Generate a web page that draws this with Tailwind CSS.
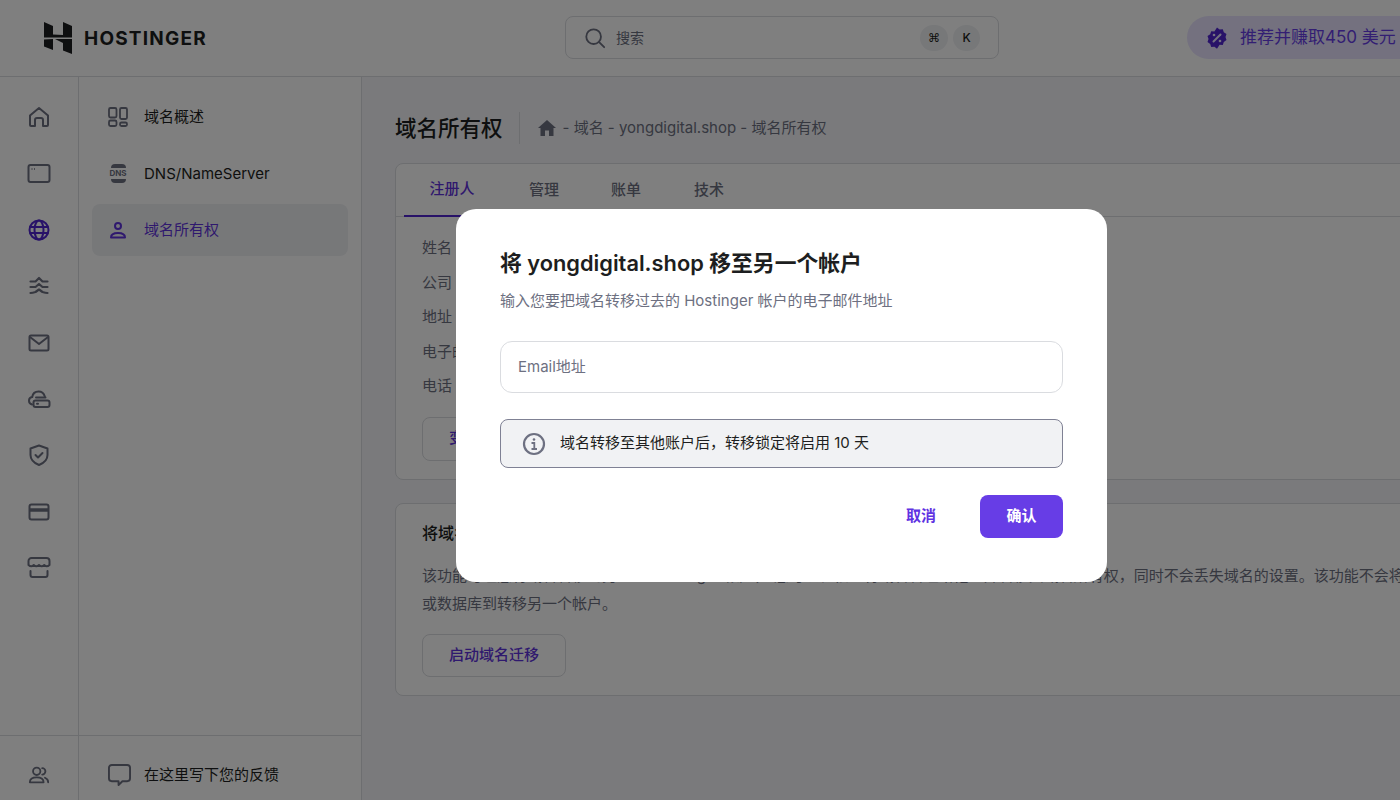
<!DOCTYPE html>
<html lang="zh">
<head>
<meta charset="utf-8" />
<title>域名所有权 - Hostinger</title>
<script src="https://cdn.jsdelivr.net/npm/@tailwindcss/browser@4"></script>
</head>
<body class="h-[800px] overflow-hidden bg-white text-[#1d1e20] font-['Inter','Noto_Sans_CJK_SC',sans-serif]">
<div class="w-[1563px]">

	<!-- header -->
	<header class="h-[77px] flex items-center pb-[1px] border-b border-[#dadce0] bg-white">
		<div class="w-[565px] shrink-0 pl-[44px] flex items-center gap-[12px]">
			<svg class="w-[28px] h-[32px]" viewBox="0 0 28 32" fill="#1d1e20">
				<path d="M0 0l9 4v8.500l10 .500V0l9 4v11.500H0z" />
				<path d="M0 17.500l9-.500v11l-9-3.500z" />
				<path d="M11 17h17v15l-9-3.500V21z" />
			</svg>
			<span class="text-[19px] leading-none font-bold tracking-[1.200px] translate-y-[1px]">HOSTINGER</span>
		</div>
		<div class="w-[434px] h-[43px] shrink-0 flex items-center pl-[18px] pr-[18px] rounded-lg border border-[#dadce0]">
			<svg class="w-[22px] h-[22px]" viewBox="0 0 24 24" fill="none" stroke="#6d7081" stroke-width="2" stroke-linecap="round">
				<circle cx="10.500" cy="10.500" r="8" />
				<path d="M16.500 16.500L22 22" />
			</svg>
			<span class="ml-[10px] text-[14px] text-[#6d7081]">搜索</span>
			<span class="ml-auto w-[28px] h-[26px] flex items-center justify-center rounded-full bg-[#eff0f3] text-[12px] font-['DejaVu_Sans',sans-serif]">⌘</span>
			<span class="ml-[5px] w-[27px] h-[26px] flex items-center justify-center rounded-full bg-[#eff0f3] text-[12px] font-medium">K</span>
		</div>
		<div class="ml-[188px] w-[300px] h-[43px] shrink-0 flex items-center pl-[18px] rounded-full bg-[#e8e3ff]">
			<svg class="w-[24px] h-[24px]" viewBox="0 0 24 24">
				<path fill="#5025d1" d="M12 1.500l2.600 1.900 3.200-.200 1 3.100 2.700 1.800-1 3 1 3-2.700 1.800-1 3.100-3.200-.200L12 22.700l-2.600-1.900-3.200.200-1-3.100-2.700-1.800 1-3-1-3 2.700-1.800 1-3.100 3.200.200z" />
				<path stroke="#e8e3ff" stroke-width="2" stroke-linecap="round" d="M8.500 15.500l7-7" />
				<circle cx="9" cy="9" r="1.300" fill="#e8e3ff" />
				<circle cx="15" cy="15" r="1.300" fill="#e8e3ff" />
			</svg>
			<span class="ml-[11px] text-[17px] text-[#673de6] whitespace-nowrap">推荐并赚取450 美元</span>
		</div>
	</header>

	<div class="flex h-[723px]">
		<!-- icon rail -->
		<nav class="w-[79px] shrink-0 flex flex-col items-center border-r border-[#dadce0] pt-[28px]">
			<div class="flex flex-col items-center gap-[32.400px] text-[#6d7081]">
				<svg class="w-[24px] h-[24px]" viewBox="0 0 24 24" fill="none" stroke="currentColor" stroke-width="2" stroke-linejoin="round"><path d="M3 10.500L12 3l9 7.500V20a1 1 0 0 1-1 1h-4v-6a2 2 0 0 0-2-2h-4a2 2 0 0 0-2 2v6H4a1 1 0 0 1-1-1z" /></svg>
				<svg class="w-[24px] h-[24px]" viewBox="0 0 24 24" fill="none" stroke="currentColor" stroke-width="2"><rect x="1.500" y="4" width="21" height="17" rx="2" /><path stroke-width="1.500" stroke-dasharray="1 1.500" d="M4.500 8h5" /></svg>
				<svg class="w-[24px] h-[24px]" viewBox="0 0 24 24" fill="none" stroke="#5025d1" stroke-width="2"><circle cx="12" cy="12" r="9.500" /><ellipse cx="12" cy="12" rx="4.500" ry="9.500" /><path d="M2.500 9h19M2.500 15h19" /></svg>
				<svg class="w-[24px] h-[24px]" viewBox="0 0 24 24" fill="none" stroke="currentColor" stroke-width="2.200" stroke-linecap="round" stroke-linejoin="round"><path d="M3.500 7.500h5L12 4l3.500 3.500h5M3.500 13h5l3.500-3 3.500 3h5M3.500 19c2 0 3.500-.500 5-1l3.500-2.500 3.500 2.500c1.500.500 3 1 5 1" /></svg>
				<svg class="w-[24px] h-[24px]" viewBox="0 0 24 24" fill="none" stroke="currentColor" stroke-width="2" stroke-linejoin="round"><rect x="2.500" y="4.500" width="19" height="15" rx="1.500" /><path d="M3 6l9 7 9-7" /></svg>
				<svg class="w-[24px] h-[24px]" viewBox="0 0 24 24" fill="none" stroke="currentColor" stroke-width="2" stroke-linecap="round"><path d="M5 17.500c-2-.500-3-2-3-3.800 0-2 1.500-3.500 3.200-3.700C5.800 6.500 8.500 4.500 11.500 4.500c3 0 5.500 2 6.300 5" /><path d="M9 10.500h9.500" /><rect x="6.500" y="13.500" width="16" height="6.500" rx="2" /><path d="M10 16.800h1" /></svg>
				<svg class="w-[24px] h-[24px]" viewBox="0 0 24 24" fill="none" stroke="currentColor" stroke-width="2" stroke-linecap="round" stroke-linejoin="round"><path d="M12 2.500l8.500 3v6.500c0 4.500-3.500 8-8.500 10-5-2-8.500-5.500-8.500-10V5.500z" /><path d="M8.500 12l2.500 2.500 4.500-4.500" /></svg>
				<svg class="w-[24px] h-[24px]" viewBox="0 0 24 24" fill="none" stroke="currentColor" stroke-width="2"><rect x="2.500" y="4.500" width="19" height="15" rx="2" /><path stroke-width="3.500" d="M3 10h18" /></svg>
				<svg class="w-[24px] h-[24px]" viewBox="0 0 24 24" fill="none" stroke="currentColor" stroke-width="2" stroke-linecap="round" stroke-linejoin="round"><path d="M4.500 2h15a3 3 0 0 1 3 3v4q-2.750 2.500-5.250 0-2.500 2.500-5.250 0-2.750 2.500-5.250 0-2.500 2.500-5.250 0V5a3 3 0 0 1 3-3z" /><path d="M3.500 15v4a2 2 0 0 0 2 2h13a2 2 0 0 0 2-2v-4" /></svg>
			</div>
			<div class="mt-auto w-full h-[65px] flex items-center justify-center pt-[14px] border-t border-[#dadce0]">
				<svg class="w-[22px] h-[22px] text-[#6d7081]" viewBox="0 0 24 24" fill="none" stroke="currentColor" stroke-width="2" stroke-linecap="round"><circle cx="9.500" cy="8" r="4" /><path d="M2 20c0-3.500 3-5.500 7.500-5.500S17 16.500 17 20z" stroke-linejoin="round" /><path d="M15.500 4.500a3.500 3.500 0 0 1 0 7M18.500 15c2 .800 3.500 2.500 3.500 5" /></svg>
			</div>
		</nav>

		<!-- second sidebar -->
		<aside class="w-[283px] shrink-0 flex flex-col border-r border-[#dadce0]">
			<div class="pt-[14px] px-[13px] flex flex-col gap-[4.500px] text-[15px]">
				<a class="h-[52px] flex items-center gap-[15px] pl-[15px]">
					<svg class="w-[22px] h-[22px] text-[#6d7081]" viewBox="0 0 22 22" fill="none" stroke="currentColor" stroke-width="1.800"><rect x="2" y="2" width="7.500" height="9.500" rx="1.500" /><rect x="13" y="2" width="7" height="11" rx="1.500" /><rect x="2" y="14.500" width="7.500" height="5.500" rx="1.500" /><rect x="13" y="16.500" width="7" height="3.500" rx="1.500" /></svg>
					域名概述
				</a>
				<a class="h-[52px] flex items-center gap-[15px] pl-[15px]">
					<span class="w-[22px] flex flex-col items-center gap-[1px]">
						<span class="w-[15px] h-[4px] rounded-t-full bg-[#6d7081]"></span>
						<span class="text-[8px] leading-[9px] font-bold text-[#6d7081]">DNS</span>
						<span class="w-[15px] h-[4px] rounded-b-full bg-[#6d7081]"></span>
					</span>
					<span class="translate-y-[1px]">DNS/NameServer</span>
				</a>
				<a class="h-[52px] flex items-center gap-[15px] pl-[15px] rounded-lg bg-[#eff0f3] text-[#5f33dc]">
					<svg class="w-[22px] h-[22px]" viewBox="0 0 22 22" fill="none" stroke="currentColor" stroke-width="2"><circle cx="11" cy="7" r="3" /><path d="M4 18.500c0-3 3-4.500 7-4.500s7 1.500 7 4.500z" stroke-linejoin="round" /></svg>
					域名所有权
				</a>
			</div>
			<div class="mt-auto h-[65px] flex items-center gap-[13px] pl-[29px] pt-[14px] border-t border-[#dadce0] text-[15px]">
				<svg class="w-[23px] h-[24px] text-[#6d7081]" viewBox="0 0 24 24" fill="none" stroke="currentColor" stroke-width="2" stroke-linejoin="round"><path d="M4 1.500h16a3 3 0 0 1 3 3v11a3 3 0 0 1-3 3h-5l-4 4v-4H4a3 3 0 0 1-3-3v-11a3 3 0 0 1 3-3z" /></svg>
				在这里写下您的反馈
			</div>
		</aside>

		<!-- main -->
		<main class="flex-1 min-w-0 bg-[#f4f5f9] px-[33px]">
			<div class="h-[86px] flex items-center pt-[16px]">
				<h1 class="text-[21.500px] font-medium whitespace-nowrap">域名所有权</h1>
				<span class="ml-[16px] h-[32px] w-px bg-[#dadce0]"></span>
				<svg class="ml-[17px] w-[20px] h-[20px]" viewBox="0 0 20 20" fill="#6d7081"><path d="M10 2L1 10h2.500v8h4.500v-5.500h4V18h4.500v-8H19z" /></svg>
				<span class="ml-[6px] text-[15px] text-[#6d7081] whitespace-nowrap">- 域名 - yongdigital.shop - 域名所有权</span>
			</div>

			<section class="h-[317px] rounded-lg border border-[#dadce0] bg-white">
				<div class="h-[53px] flex border-b border-[#dadce0] text-[15px] font-medium">
					<span class="w-[96px] ml-[8px] flex items-center justify-center border-b-2 border-[#5025d1] text-[#5f33dc] h-[53px]">注册人</span>
					<span class="ml-[29px] flex items-center text-[#6d7081]">管理</span>
					<span class="ml-[52px] flex items-center text-[#6d7081]">账单</span>
					<span class="ml-[53px] flex items-center text-[#6d7081]">技术</span>
				</div>
				<div class="pl-[26px] pt-[14px] text-[15px] text-[#6d7081]">
					<p class="h-[34.500px] leading-[34.500px]">姓名</p>
					<p class="h-[34.500px] leading-[34.500px]">公司</p>
					<p class="h-[34.500px] leading-[34.500px]">地址</p>
					<p class="h-[34.500px] leading-[34.500px]">电子邮件</p>
					<p class="h-[34.500px] leading-[34.500px]">电话</p>
					<button class="mt-[13px] px-[26px] h-[44px] rounded-lg border border-[#dadce0] text-[15px] font-medium text-[#5f33dc]">变更联系人</button>
				</div>
			</section>

			<section class="mt-[23px] h-[193px] rounded-lg border border-[#dadce0] bg-white pl-[26px] pt-[16px]">
				<h2 class="text-[16px] font-medium leading-[26px] text-[#1d1e20]">将域名移至另一个帐户</h2>
				<p class="mt-[16px] text-[15px] leading-[28px] text-[#6d7081] whitespace-nowrap">该功能可让您将域名转移到另一个 Hostinger 帐户， 您可以轻松地将域名转让给他人并转移其域名所有权，同时不会丢失域名的设置。该功能不会将网站文件<br>或数据库到转移另一个帐户。</p>
				<button class="mt-[16px] w-[144px] h-[43px] rounded-lg border border-[#dadce0] text-[15px] font-medium text-[#5f33dc]">启动域名迁移</button>
			</section>
		</main>
	</div>

	<!-- backdrop + modal -->
	<div class="fixed inset-0 w-[1563px] bg-black/50 flex justify-center items-start">
		<div class="mt-[209px] w-[651px] h-[373px] rounded-[20px] bg-white px-[44px] pt-[39px]">
			<h3 class="text-[21.800px] leading-[30px] font-semibold text-[#1d1e20] whitespace-nowrap">将 yongdigital.shop 移至另一个帐户</h3>
			<p class="mt-[11px] text-[15px] leading-[24px] text-[#6d7081] whitespace-nowrap">输入您要把域名转移过去的 Hostinger 帐户的电子邮件地址</p>
			<div class="mt-[28px] h-[52px] flex items-center pl-[17px] rounded-xl border-[1.500px] border-[#dadce0] text-[15px] text-[#6d7081]">Email地址</div>
			<div class="mt-[26px] h-[49px] flex items-center pl-[21px] rounded-lg border-[1.500px] border-[#7f8194] bg-[#f1f2f4]">
				<svg class="w-[24px] h-[24px]" viewBox="0 0 24 24" fill="none" stroke="#6d7081" stroke-width="2.200"><circle cx="12" cy="12" r="10" /><path d="M9.500 11h2.800v6M9.500 17h5.500" stroke-width="1.800" /><circle cx="12" cy="7.500" r="1.300" fill="#6d7081" stroke="none" /></svg>
				<span class="ml-[14px] text-[15px] text-[#1d1e20] whitespace-nowrap">域名转移至其他账户后，转移锁定将启用 10 天</span>
			</div>
			<div class="mt-[27px] flex items-center justify-end">
				<button class="text-[15px] font-semibold text-[#5f33e2]">取消</button>
				<button class="ml-[44px] w-[83px] h-[43px] rounded-lg bg-[#673de6] text-[15px] font-semibold text-white">确认</button>
			</div>
		</div>
	</div>
</div>
</body>
</html>
